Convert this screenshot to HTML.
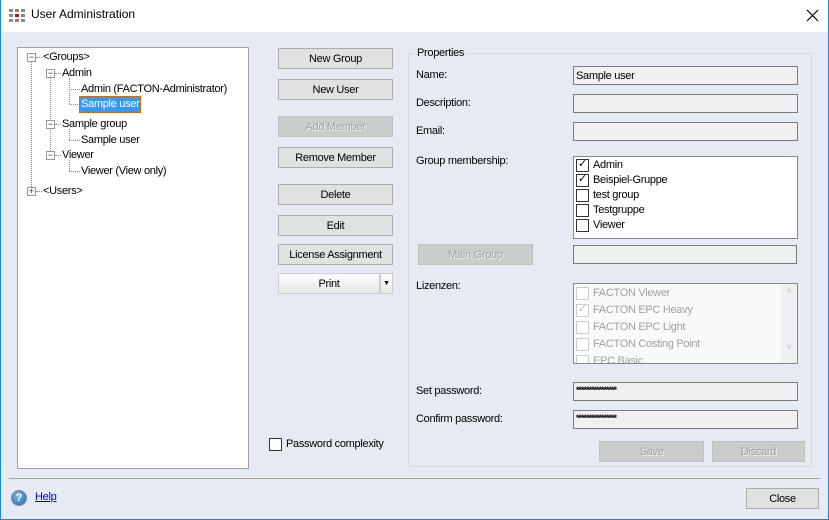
<!DOCTYPE html>
<html><head><meta charset="utf-8"><style>
*{margin:0;padding:0;box-sizing:border-box}
body{width:829px;height:520px;overflow:hidden;background:#e6eaf2;font-family:"Liberation Sans",sans-serif;font-size:11px;letter-spacing:-0.3px;color:#000;position:relative}
.a{position:absolute;white-space:nowrap;line-height:15px}
.btn{position:absolute;background:#e1e1e1;border:1px solid #adadad;text-align:center;line-height:20px;height:21px}
.dis{background:#cccccc;border-color:#bfbfbf;color:#a0a0a0;text-shadow:1px 1px 0 #f4f4f4}
.tb{position:absolute;background:#f0f0f0;border:1px solid #7a7a7a;height:19px;line-height:18px;padding-left:2px}
.cb{position:absolute;width:13px;height:13px;border:1px solid #333;background:#fff}
.cbd{border-color:#ccc}
.lbl{position:absolute;left:416px;line-height:15px}
.dv{position:absolute;border-left:1px dotted #888}
.dh{position:absolute;border-top:1px dotted #888}
.pm{position:absolute;width:9px;height:9px;border:1px solid #999;background:#fff;font-size:9px;line-height:6px;text-align:center;color:#333;letter-spacing:0}
.pw{font-size:9px;line-height:14px;letter-spacing:-1px;font-weight:bold}
</style></head><body>
<div class="a" style="left:0;top:0;width:829px;height:32px;background:#fff"></div>
<div class="a" style="left:0;top:0;width:1px;height:520px;background:#1883d7"></div>
<div class="a" style="left:828px;top:0;width:1px;height:520px;background:#1883d7"></div>
<div class="a" style="left:0;top:519px;width:829px;height:1px;background:#1883d7"></div>
<svg class="a" style="left:9px;top:9px" width="17" height="13"><g fill="#888"><rect x="0" y="0" width="4" height="3"/><rect x="6" y="0" width="4" height="3"/><rect x="12" y="0" width="4" height="3"/><rect x="0" y="5" width="4" height="3"/><rect x="6" y="5" width="4" height="3" fill="#b01818"/><rect x="12" y="5" width="4" height="3"/><rect x="0" y="10" width="4" height="3"/><rect x="6" y="10" width="4" height="3"/><rect x="12" y="10" width="4" height="3"/></g></svg>
<div class="a" style="left:31px;top:7px;font-size:12px;letter-spacing:0">User Administration</div>
<svg class="a" style="left:806px;top:9px" width="13" height="13"><path d="M1 1L12 12M12 1L1 12" stroke="#000" stroke-width="1.2"/></svg>

<div class="a" style="left:17px;top:47px;width:232px;height:422px;background:#fff;border:1px solid #a0a0a0"></div>
<div class="dv" style="left:31px;top:62px;height:129px"></div>
<div class="dv" style="left:50px;top:78px;height:77px"></div>
<div class="dv" style="left:69px;top:78px;height:26px"></div>
<div class="dv" style="left:69px;top:129px;height:11px"></div>
<div class="dv" style="left:69px;top:160px;height:11px"></div>
<div class="dh" style="left:36px;top:57px;width:6px"></div>
<div class="dh" style="left:55px;top:73px;width:6px"></div>
<div class="dh" style="left:55px;top:124px;width:6px"></div>
<div class="dh" style="left:55px;top:155px;width:6px"></div>
<div class="dh" style="left:36px;top:191px;width:6px"></div>
<div class="dh" style="left:69px;top:89px;width:11px"></div>
<div class="dh" style="left:69px;top:104px;width:11px"></div>
<div class="dh" style="left:69px;top:140px;width:11px"></div>
<div class="dh" style="left:69px;top:171px;width:11px"></div>
<div class="pm" style="left:27px;top:53px">−</div>
<div class="pm" style="left:46px;top:69px">−</div>
<div class="pm" style="left:46px;top:120px">−</div>
<div class="pm" style="left:46px;top:151px">−</div>
<div class="pm" style="left:27px;top:187px;line-height:7px">+</div>
<div class="a" style="left:43px;top:50px">&lt;Groups&gt;</div>
<div class="a" style="left:62px;top:66px">Admin</div>
<div class="a" style="left:81px;top:82px">Admin (FACTON-Administrator)</div>
<div class="a" style="left:79px;top:96px;width:62px;height:17px;background:#3399ff;border:1px dotted #c60;color:#fff;padding-left:1px;line-height:15px">Sample user</div>
<div class="a" style="left:62px;top:117px">Sample group</div>
<div class="a" style="left:81px;top:133px">Sample user</div>
<div class="a" style="left:62px;top:148px">Viewer</div>
<div class="a" style="left:81px;top:164px">Viewer (View only)</div>
<div class="a" style="left:43px;top:184px">&lt;Users&gt;</div>

<div class="btn" style="left:278px;top:48px;width:115px">New Group</div>
<div class="btn" style="left:278px;top:79px;width:115px">New User</div>
<div class="btn dis" style="left:278px;top:116px;width:115px">Add Member</div>
<div class="btn" style="left:278px;top:147px;width:115px">Remove Member</div>
<div class="btn" style="left:278px;top:184px;width:115px">Delete</div>
<div class="btn" style="left:278px;top:215px;width:115px">Edit</div>
<div class="btn" style="left:278px;top:244px;width:115px">License Assignment</div>
<div class="btn" style="left:278px;top:273px;width:102px;background:linear-gradient(#fdfdfd,#e8e8e8);border-color:#ccc">Print</div>
<div class="btn" style="left:380px;top:273px;width:13px;background:linear-gradient(#fdfdfd,#e8e8e8);border-color:#ccc;font-size:7px">▼</div>

<div class="a" style="left:408px;top:53px;width:404px;height:414px;border:1px solid #d5d8de"></div>
<div class="a" style="left:415px;top:46px;background:#e6eaf2;padding:0 2px">Properties</div>
<div class="lbl" style="top:68px">Name:</div>
<div class="lbl" style="top:96px">Description:</div>
<div class="lbl" style="top:124px">Email:</div>
<div class="lbl" style="top:154px">Group membership:</div>
<div class="lbl" style="top:279px">Lizenzen:</div>
<div class="lbl" style="top:384px">Set password:</div>
<div class="lbl" style="top:412px">Confirm password:</div>
<div class="tb" style="left:573px;top:66px;width:225px">Sample user</div>
<div class="tb" style="left:573px;top:94px;width:225px"></div>
<div class="tb" style="left:573px;top:122px;width:225px"></div>
<div class="a" style="left:573px;top:156px;width:225px;height:83px;background:#fff;border:1px solid #828790"></div>
<div class="cb" style="left:576px;top:159px"></div><div class="a" style="left:578px;top:157px">✓</div><div class="a" style="left:593px;top:158px">Admin</div>
<div class="cb" style="left:576px;top:174px"></div><div class="a" style="left:578px;top:172px">✓</div><div class="a" style="left:593px;top:173px">Beispiel-Gruppe</div>
<div class="cb" style="left:576px;top:189px"></div><div class="a" style="left:593px;top:188px">test group</div>
<div class="cb" style="left:576px;top:204px"></div><div class="a" style="left:593px;top:203px">Testgruppe</div>
<div class="cb" style="left:576px;top:219px"></div><div class="a" style="left:593px;top:218px">Viewer</div>
<div class="btn dis" style="left:418px;top:244px;width:115px">Main Group</div>
<div class="tb" style="left:573px;top:245px;width:224px"></div>
<div class="a" style="left:573px;top:283px;width:225px;height:81px;background:#fafafa;border:1px solid #828790;overflow:hidden;color:#a0a0a0">
<div class="cb cbd" style="left:2px;top:3px"></div><div class="a" style="left:19px;top:2px">FACTON Viewer</div>
<div class="cb cbd" style="left:2px;top:20px"></div><div class="a" style="left:4px;top:18px;color:#bbb">✓</div><div class="a" style="left:19px;top:19px">FACTON EPC Heavy</div>
<div class="cb cbd" style="left:2px;top:37px"></div><div class="a" style="left:19px;top:36px">FACTON EPC Light</div>
<div class="cb cbd" style="left:2px;top:54px"></div><div class="a" style="left:19px;top:53px">FACTON Costing Point</div>
<div class="cb cbd" style="left:2px;top:71px"></div><div class="a" style="left:19px;top:70px">EPC Basic</div>
<div class="a" style="left:207px;top:0;width:16px;height:79px;background:#f0f0f0;font-size:9px;text-align:center;color:#bbb;line-height:14px">˄<br><br><br><br>˅</div>
</div>
<div class="tb pw" style="left:573px;top:382px;width:225px">****************</div>
<div class="tb pw" style="left:573px;top:410px;width:225px">****************</div>
<div class="btn dis" style="left:599px;top:441px;width:105px">Save</div>
<div class="btn dis" style="left:712px;top:441px;width:93px">Discard</div>

<div class="cb" style="left:269px;top:438px"></div>
<div class="a" style="left:286px;top:437px">Password complexity</div>

<div class="a" style="left:9px;top:478px;width:811px;height:1px;background:#a0a0a0"></div>
<div class="a" style="left:11px;top:490px;width:16px;height:16px;border-radius:50%;background:radial-gradient(circle at 40% 35%,#7ab8e8,#2467a8);border:1px solid #7a8a9a;color:#fff;font-weight:bold;font-size:11px;text-align:center;line-height:14px;letter-spacing:0">?</div>
<div class="a" style="left:35px;top:490px;color:#00e;text-decoration:underline">Help</div>
<div class="btn" style="left:746px;top:488px;width:73px">Close</div>
</body></html>
